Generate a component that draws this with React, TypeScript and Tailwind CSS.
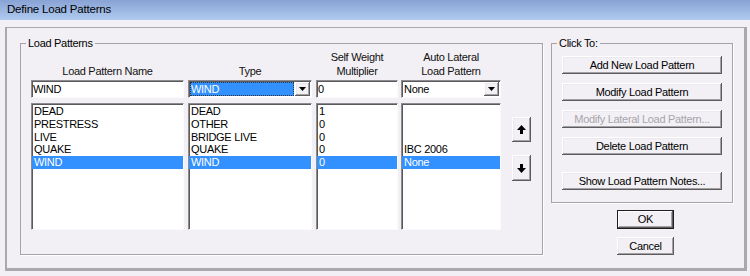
import React from 'react';

const font = "font-['Liberation_Sans',Arial,sans-serif]";

const raised =
  'shadow-[inset_-1px_-1px_#5c5c5c,inset_1px_1px_#ffffff,inset_-2px_-2px_#a3a1a6,inset_2px_2px_#ece9ee]';
const sunken =
  'border border-t-[#8d8b90] border-l-[#8d8b90] border-b-[#fbfafc] border-r-[#fbfafc] shadow-[inset_1px_1px_#5a595c]';

const names = ['DEAD', 'PRESTRESS', 'LIVE', 'QUAKE', 'WIND'];
const types = ['DEAD', 'OTHER', 'BRIDGE LIVE', 'QUAKE', 'WIND'];
const weights = ['1', '0', '0', '0', '0'];
const laterals = ['', '', '', 'IBC 2006', 'None'];

const Arrow: React.FC<{ down?: boolean }> = ({ down }) => (
  <svg width="9" height="9" viewBox="0 0 9 9" className={down ? 'rotate-180' : ''}>
    <polygon points="4.5,0 9,5 6,5 6,9 3,9 3,5 0,5" fill="#000" />
  </svg>
);

const DropArrow = () => (
  <div className={`w-[15px] h-full flex items-center justify-center bg-[#f3f0f5] ${raised}`}>
    <svg width="7" height="4" viewBox="0 0 7 4">
      <polygon points="0,0 7,0 3.5,4" fill="#000" />
    </svg>
  </div>
);

const ListBox: React.FC<{ items: string[] }> = ({ items }) => (
  <div className={`h-[127px] bg-white pt-[1px] ${sunken}`}>
    {items.map((it, i) => (
      <div
        key={i}
        className={`h-[12.75px] leading-[13px] pl-[2px] whitespace-nowrap ${
          i === items.length - 1 ? 'bg-[#3390ff] text-white' : 'text-black'
        }`}
      >
        {it}
      </div>
    ))}
  </div>
);

const Header: React.FC<{ lines: string[] }> = ({ lines }) => (
  <div className="h-[34px] flex flex-col justify-end items-center leading-[14px] text-[#111]">
    {lines.map((l) => (
      <span key={l}>{l}</span>
    ))}
  </div>
);

const Button: React.FC<{ label: string; disabled?: boolean }> = ({ label, disabled }) => (
  <div
    className={`h-[18px] w-[160px] flex items-center justify-center bg-[#f3f0f5] ${raised} ${
      disabled ? 'text-[#a7a5aa]' : 'text-black'
    }`}
  >
    {label}
  </div>
);

export default function App() {
  return (
    <div
      className={`w-[750px] h-[276px] bg-[#f3f0f5] flex flex-col overflow-hidden text-[11px] tracking-[-0.3px] ${font}`}
    >
      <div className="h-[20px] shrink-0 bg-gradient-to-b from-[#88a3d4] to-[#b0cbf0] flex items-center pl-[7px] text-[11.5px] tracking-[-0.2px] text-black">
        Define Load Patterns
      </div>

      <div className="flex-1 pt-[7px] pl-[5px] pr-[3px] pb-[5px]">
        <div className="h-[244px] border-t border-l-2 border-r-[3px] border-b-[3px] border-[#aaa8ad] flex pl-[13px] pt-[15px]">
          {/* Load Patterns group */}
          <div className="relative w-[523px] h-[212px] border border-[#a5a3a8] shadow-[1px_1px_#ffffff]">
            <span className="absolute left-[5px] top-[-8px] px-[2px] bg-[#f3f0f5] leading-[14px] text-black">
              Load Patterns
            </span>
            <div className="flex pl-[10px]">
              <div className="w-[153px] flex flex-col">
                <Header lines={['Load Pattern Name']} />
                <div className={`mt-[2px] h-[18px] bg-white pl-[1px] flex items-center ${sunken}`}>WIND</div>
                <div className="mt-[5px]">
                  <ListBox items={names} />
                </div>
              </div>
              <div className="ml-[4px] w-[124px] flex flex-col">
                <Header lines={['Type']} />
                <div className={`mt-[2px] h-[18px] bg-white flex items-stretch p-[1px] ${sunken}`}>
                  <div className="flex-1 bg-[#3390ff] text-white pl-[1px] flex items-center outline outline-1 outline-dotted outline-[#333] -outline-offset-1 mr-[1px]">
                    WIND
                  </div>
                  <DropArrow />
                </div>
                <div className="mt-[5px]">
                  <ListBox items={types} />
                </div>
              </div>
              <div className="ml-[4px] w-[82px] flex flex-col">
                <Header lines={['Self Weight', 'Multiplier']} />
                <div className={`mt-[2px] h-[18px] bg-white pl-[1px] flex items-center ${sunken}`}>0</div>
                <div className="mt-[5px]">
                  <ListBox items={weights} />
                </div>
              </div>
              <div className="ml-[3px] w-[100px] flex flex-col">
                <Header lines={['Auto Lateral', 'Load Pattern']} />
                <div className={`mt-[2px] h-[18px] bg-white flex items-stretch p-[1px] ${sunken}`}>
                  <div className="flex-1 pl-[1px] flex items-center text-black">None</div>
                  <DropArrow />
                </div>
                <div className="mt-[5px]">
                  <ListBox items={laterals} />
                </div>
              </div>
              <div className="ml-[11px] flex flex-col">
                <div className={`mt-[73px] w-[19px] h-[25px] flex items-center justify-center bg-[#f3f0f5] ${raised}`}>
                  <Arrow />
                </div>
                <div className={`mt-[13px] w-[19px] h-[26px] flex items-center justify-center bg-[#f3f0f5] ${raised}`}>
                  <Arrow down />
                </div>
              </div>
            </div>
          </div>

          {/* Right column */}
          <div className="ml-[8px] flex flex-col">
            <div className="relative w-[182px] h-[160px] border border-[#a5a3a8] shadow-[1px_1px_#ffffff] pl-[10px] pt-[12px] flex flex-col">
              <span className="absolute left-[5px] top-[-8px] px-[2px] bg-[#f3f0f5] leading-[14px] text-black">
                Click To:
              </span>
              <Button label="Add New Load Pattern" />
              <div className="mt-[9px]">
                <Button label="Modify Load Pattern" />
              </div>
              <div className="mt-[9px]">
                <Button label="Modify Lateral Load Pattern..." disabled />
              </div>
              <div className="mt-[9px]">
                <Button label="Delete Load Pattern" />
              </div>
              <div className="mt-[17px]">
                <Button label="Show Load Pattern Notes..." />
              </div>
            </div>
            <div className="ml-[66px] mt-[7px] w-[57px] h-[19px] border border-[#1e1e1e] bg-[#f3f0f5] flex items-center justify-center shadow-[inset_-1px_-1px_#5c5c5c,inset_1px_1px_#ffffff,inset_-2px_-2px_#a3a1a6]">
              OK
            </div>
            <div className={`ml-[66px] mt-[8px] w-[57px] h-[18px] bg-[#f3f0f5] flex items-center justify-center ${raised}`}>
              Cancel
            </div>
          </div>
        </div>
      </div>
    </div>
  );
}
